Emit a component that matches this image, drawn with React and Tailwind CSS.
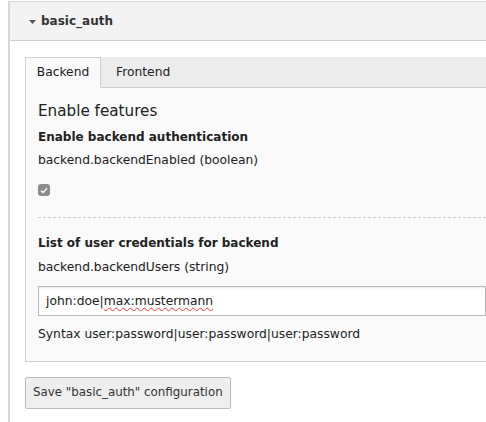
export default function App(){

  return(

    <div className="w-[486px] h-[422px] overflow-hidden bg-white pt-[1px] pl-[8px] text-[12.3px] text-[#212121]" style={{fontFamily:'"DejaVu Sans", Verdana, sans-serif'}}>

      <div className="h-full border-l-2 border-t border-[#d7d7d7] bg-white">

        {/* HEADER */}

        <div className="h-[39px] bg-[#f3f3f3] border-b border-[#cfcfcf] flex items-center pl-[19px]">
          <svg width="7" height="4" viewBox="0 0 7 4" className="mr-[5px] mt-[1px]">
            <path d="M0 0 L7 0 L3.5 4 Z" fill="#555"/>
          </svg>
          <span className="font-bold text-[12px] text-[#333]">basic_auth</span>
        </div>

        {/* BODY */}

        <div className="pl-[15px] pt-[15px]">

          <div className="flex h-[32px] bg-[#ececec] border-b border-[#cfcfcf] border-t border-t-white">
            <div className="w-[76px] -mb-px bg-[#fafafa] border border-[#cfcfcf] border-b-[#fafafa] flex items-center justify-center">
              Backend
            </div>
            <div className="px-[15px] flex items-center">
              Frontend
            </div>
          </div>

          <div className="bg-[#fafafa] border-l border-b border-[#cfcfcf] h-[274px] pl-[12px] pt-[13px]">

            <div className="text-[15.2px] leading-[20px]">Enable features</div>

            <div className="font-bold text-[12px] mt-[7px] leading-[18px]">Enable backend authentication</div>

            <div className="mt-[5px] leading-[18px]">backend.backendEnabled (boolean)</div>

            <div className="mt-[15px] w-[12px] h-[12px] rounded-[3px] bg-[#8c8c8c] flex items-center justify-center">
              <svg width="8" height="7" viewBox="0 0 8 7">
                <path d="M1 3.8 L3 5.6 L7 1.2" stroke="#fff" strokeWidth="1.4" fill="none"/>
              </svg>
            </div>

            <div className="mt-[21px] border-t border-dashed border-[#cfcfcf]"></div>

            <div className="font-bold text-[12px] mt-[16px] leading-[18px]">List of user credentials for backend</div>

            <div className="mt-[6px] leading-[18px]">backend.backendUsers (string)</div>

            <div className="mt-[10px] h-[30px] bg-white border border-[#bbbbbb] shadow-[inset_0_1px_2px_rgba(0,0,0,0.08)] flex items-center pl-[7px]">
              john:doe|<span className="underline decoration-wavy decoration-[#e33] decoration-1 underline-offset-2">max:mustermann</span>
            </div>

            <div className="mt-[9px] leading-[18px]">Syntax user:password|user:password|user:password</div>

          </div>

          <button className="mt-[15px] h-[32px] px-[7px] bg-[#eeeeee] border border-[#bbbbbb] rounded-[2px] text-[11.85px] text-[#333]">
            Save "basic_auth" configuration
          </button>

        </div>

      </div>

    </div>

  );

}
